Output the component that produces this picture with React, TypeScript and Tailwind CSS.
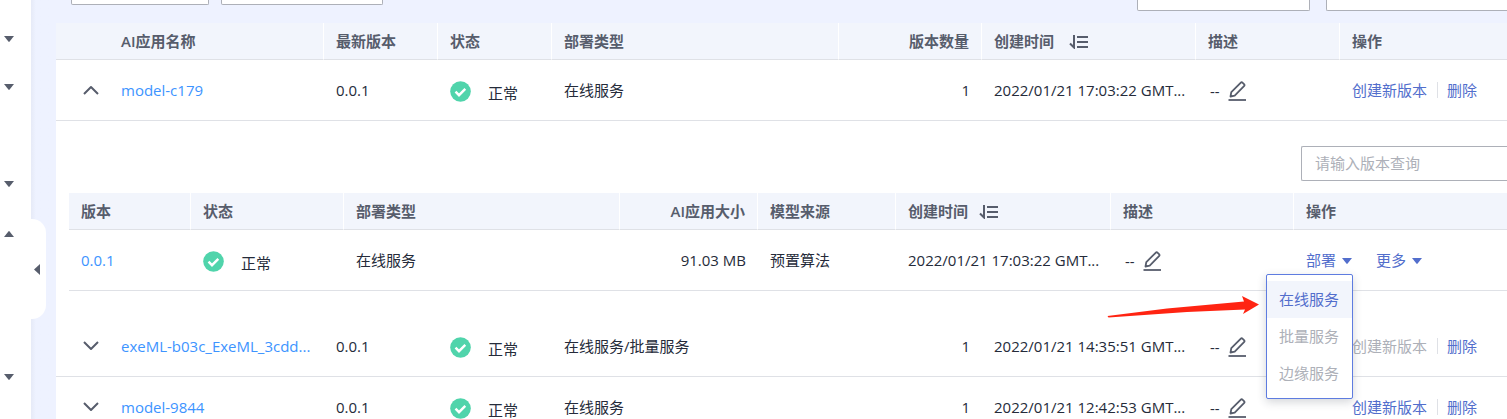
import type { ReactNode } from "react";

const NAV_ITEMS = [
  { id: "overview", open: false, spacing: "" },
  { id: "automation", open: false, spacing: "" },
  { id: "training", open: false, spacing: "mt-[49px]" },
  { id: "applications", open: true, spacing: "mt-[2px]" },
  { id: "services", open: false, spacing: "mt-[95px]" },
];

const APPS = [
  {
    name: "model-c179",
    type: "在线服务",
    created: "2022/01/21 17:03:22 GMT...",
    expanded: true,
    canCreate: true,
  },
  {
    name: "exeML-b03c_ExeML_3cdd...",
    type: "在线服务/批量服务",
    created: "2022/01/21 14:35:51 GMT...",
    expanded: false,
    canCreate: false,
  },
  {
    name: "model-9844",
    type: "在线服务",
    created: "2022/01/21 12:42:53 GMT...",
    expanded: false,
    canCreate: true,
  },
];

const DEPLOY_OPTIONS = [
  { label: "在线服务", enabled: true },
  { label: "批量服务", enabled: false },
  { label: "边缘服务", enabled: false },
];

function Caret({ className = "" }: { className?: string }) {
  return (
    <svg viewBox="0 0 10 6" className={`h-[6px] w-[10px] shrink-0 ${className}`} fill="currentColor" aria-hidden="true">
      <path d="M0 0h10L5.6 5.6a.8.8 0 0 1-1.2 0z" />
    </svg>
  );
}

function Chevron({ up = false }: { up?: boolean }) {
  return (
    <svg
      viewBox="0 0 16 10"
      className="h-[10px] w-4"
      fill="none"
      stroke="#575d6c"
      strokeWidth="2"
      strokeLinejoin="round"
      aria-hidden="true"
    >
      <path d={up ? "M1 9l7-7 7 7" : "M1 1l7 7 7-7"} />
    </svg>
  );
}

function SortIcon() {
  return (
    <svg viewBox="0 0 20 16" className="h-4 w-5" fill="none" stroke="#575d6c" strokeWidth="2" aria-hidden="true">
      <path d="M6 2v12.500L2 10.500" />
      <path d="M9 4h11M9 9h11M9 14h11" />
    </svg>
  );
}

function EditIcon() {
  return (
    <svg
      viewBox="0 0 18 20"
      className="h-5 w-[18px]"
      fill="none"
      stroke="#575d6c"
      strokeWidth="1.800"
      strokeLinejoin="round"
      aria-hidden="true"
    >
      <path d="M2.500 15.500l.8-4.300 9.300-9.400a1.500 1.500 0 0 1 2.100 0l1.300 1.300a1.500 1.500 0 0 1 0 2.100l-9.300 9.400z" />
      <path d="M.5 19h17.500" />
    </svg>
  );
}

function Th({ children, right = false }: { children?: ReactNode; right?: boolean }) {
  return (
    <th
      scope="col"
      className={`border-r border-b border-r-white border-b-[#dfe1e6] px-3 font-semibold last:border-r-0 ${
        right ? "text-right" : "text-left"
      }`}
    >
      {children}
    </th>
  );
}

function SortableLabel({ gap }: { gap: string }) {
  return (
    <span className={`flex items-center ${gap}`}>
      创建时间
      <button type="button" aria-label="排序">
        <SortIcon />
      </button>
    </span>
  );
}

function Td({ children, className = "" }: { children?: ReactNode; className?: string }) {
  return <td className={`border-b border-[#dfe1e6] px-3 pb-px whitespace-nowrap ${className}`}>{children}</td>;
}

function Status() {
  return (
    <span className="flex items-center gap-[17px] pt-[3px]">
      <svg viewBox="0 0 21 21" className="size-[21px]" aria-hidden="true">
        <circle cx="10.500" cy="10.500" r="10.300" fill="#50d4ab" />
        <path d="M5.500 10.700l3.500 3.500 6.300-6.300" fill="none" stroke="#fff" strokeWidth="2.400" />
      </svg>
      <span className="pt-1">正常</span>
    </span>
  );
}

function Description() {
  return (
    <span className="flex items-center gap-2 pt-[3px] pl-[2px]">
      <span>--</span>
      <button type="button" aria-label="编辑描述">
        <EditIcon />
      </button>
    </span>
  );
}

function DeployMenu() {
  return (
    <div className="absolute top-6 -left-10 z-10 w-[87px]">
      <ul className="rounded-[2px] border border-[#5e7ce0] bg-white pt-[6px] pb-[6px] shadow-[0_3px_10px_rgba(37,43,58,0.2)]">
        {DEPLOY_OPTIONS.map((option) => (
          <li key={option.label}>
            <button
              type="button"
              disabled={!option.enabled}
              className={`h-[37px] w-full px-3 text-left ${
                option.enabled ? "bg-[#f2f5fc] text-[#526ecc]" : "text-[#adb0b8]"
              }`}
            >
              {option.label}
            </button>
          </li>
        ))}
      </ul>
      <svg
        viewBox="0 0 152 22"
        className="absolute top-[22px] right-[94px] h-[22px] w-[152px]"
        fill="#ff2412"
        aria-hidden="true"
      >
        <path d="M.5 20 60 12.500 137 5.500 135 0 152 8.500 136 18l2-4.500L80 16 1.500 21.500z" />
      </svg>
    </div>
  );
}

function VersionTable() {
  return (
    <table className="w-full table-fixed border-separate border-spacing-0">
      <colgroup>
        <col className="w-[122px]" />
        <col className="w-[153px]" />
        <col />
        <col className="w-[138px]" />
        <col className="w-[138px]" />
        <col className="w-[215px]" />
        <col className="w-[183px]" />
        <col className="w-[213px]" />
      </colgroup>
      <thead>
        <tr className="h-[37px] bg-[#f2f5fc] text-[#575d6c]">
          <Th>版本</Th>
          <Th>状态</Th>
          <Th>部署类型</Th>
          <Th right>AI应用大小</Th>
          <Th>模型来源</Th>
          <Th>
            <SortableLabel gap="gap-[10px]" />
          </Th>
          <Th>描述</Th>
          <Th>操作</Th>
        </tr>
      </thead>
      <tbody>
        <tr className="h-[61px]">
          <Td>
            <a href="#version" className="text-[#3d94ff]">
              0.0.1
            </a>
          </Td>
          <Td>
            <Status />
          </Td>
          <Td>在线服务</Td>
          <Td className="text-right">91.03 MB</Td>
          <Td>预置算法</Td>
          <Td>2022/01/21 17:03:22 GMT...</Td>
          <Td>
            <Description />
          </Td>
          <Td>
            <div className="flex gap-6 text-[#526ecc]">
              <div className="relative">
                <button type="button" aria-expanded="true" className="flex items-center gap-[6px]">
                  部署
                  <Caret className="mt-[2px]" />
                </button>
                <DeployMenu />
              </div>
              <button type="button" className="flex items-center gap-[6px]">
                更多
                <Caret className="mt-[2px]" />
              </button>
            </div>
          </Td>
        </tr>
      </tbody>
    </table>
  );
}

function AppRow({ app }: { app: (typeof APPS)[number] }) {
  return (
    <>
      <tr className="h-[61px]">
        <Td>
          <button type="button" aria-label="展开" aria-expanded={app.expanded} className="block pl-[15px]">
            <Chevron up={app.expanded} />
          </button>
        </Td>
        <Td>
          <a href="#app" className="block truncate text-[#3d94ff]">
            {app.name}
          </a>
        </Td>
        <Td>0.0.1</Td>
        <Td>
          <Status />
        </Td>
        <Td>{app.type}</Td>
        <Td className="text-right">1</Td>
        <Td>{app.created}</Td>
        <Td>
          <Description />
        </Td>
        <Td>
          <div className="flex items-center text-[#526ecc]">
            <button type="button" disabled={!app.canCreate} className="disabled:text-[#adb0b8]">
              创建新版本
            </button>
            <span className="mr-[9px] ml-[10px] h-4 w-px bg-[#dfe1e6]" />
            <button type="button">删除</button>
          </div>
        </Td>
      </tr>
      {app.expanded && (
        <tr>
          <td colSpan={9} className="pt-[25px] pb-[25px] pl-[13px]">
            <div className="mb-3 flex justify-end">
              <input
                type="text"
                aria-label="版本查询"
                placeholder="请输入版本查询"
                className="h-[35px] w-[206px] rounded-l-[2px] border border-r-0 border-[#adb0b8] px-[13px] pb-[2px] placeholder:text-[#adb0b8]"
              />
            </div>
            <VersionTable />
          </td>
        </tr>
      )}
    </>
  );
}

export default function App() {
  return (
    <div className="flex h-screen overflow-hidden bg-[#eef2ff] font-['Open_Sans','Noto_Sans_CJK_SC',sans-serif] text-[15px] leading-5 text-[#252b3a]">
      <nav className="w-[31px] shrink-0 bg-white pt-[15px] text-[#575d6c]">
        {NAV_ITEMS.map((item) => (
          <button
            key={item.id}
            type="button"
            aria-label={item.id}
            aria-expanded={item.open}
            className={`flex h-12 w-full items-center pl-1 ${item.spacing}`}
          >
            <Caret className={item.open ? "rotate-180" : ""} />
          </button>
        ))}
      </nav>
      <div className="w-[25px] shrink-0 bg-linear-to-r from-[#e6eaf7] to-[#eef2ff] to-20% pt-[219px]">
        <button
          type="button"
          aria-label="收起"
          className="flex h-[100px] w-[15px] items-center rounded-r-[14px] bg-white pl-[3px] text-[#575d6c]"
        >
          <svg viewBox="0 0 6 11" className="h-[11px] w-[6px]" fill="currentColor" aria-hidden="true">
            <path d="M6 0v11L0 5.500z" />
          </svg>
        </button>
      </div>

      <main className="min-w-0 flex-1">
        <div className="flex h-[23px] items-start justify-between pl-[15px]">
          <div className="flex gap-3">
            <button
              type="button"
              aria-label="导入"
              className="h-[5px] w-[138px] rounded-b-[2px] border border-t-0 border-[#adb0b8] bg-white"
            />
            <button
              type="button"
              aria-label="查找"
              className="h-[5px] w-[162px] rounded-b-[2px] border border-t-0 border-[#adb0b8] bg-white"
            />
          </div>
          <div className="flex gap-4">
            <button
              type="button"
              aria-label="筛选"
              className="h-[11px] w-[173px] rounded-b-[2px] border border-t-0 border-[#adb0b8] bg-white"
            />
            <input
              type="text"
              aria-label="名称查询"
              className="h-[11px] w-[181px] rounded-bl-[2px] border border-t-0 border-r-0 border-[#adb0b8] bg-white"
            />
          </div>
        </div>

        <table className="w-full table-fixed border-separate border-spacing-0 bg-white">
          <colgroup>
            <col className="w-[53px]" />
            <col className="w-[215px]" />
            <col className="w-[114px]" />
            <col className="w-[114px]" />
            <col />
            <col className="w-[143px]" />
            <col className="w-[214px]" />
            <col className="w-[144px]" />
            <col className="w-[167px]" />
          </colgroup>
          <thead>
            <tr className="h-[37px] bg-[#f2f5fc] text-[#575d6c]">
              <td className="border-b border-[#dfe1e6]" />
              <Th>AI应用名称</Th>
              <Th>最新版本</Th>
              <Th>状态</Th>
              <Th>部署类型</Th>
              <Th right>版本数量</Th>
              <Th>
                <SortableLabel gap="gap-[14px]" />
              </Th>
              <Th>描述</Th>
              <Th>操作</Th>
            </tr>
          </thead>
          <tbody>
            {APPS.map((app) => (
              <AppRow key={app.name} app={app} />
            ))}
          </tbody>
        </table>
      </main>
    </div>
  );
}
